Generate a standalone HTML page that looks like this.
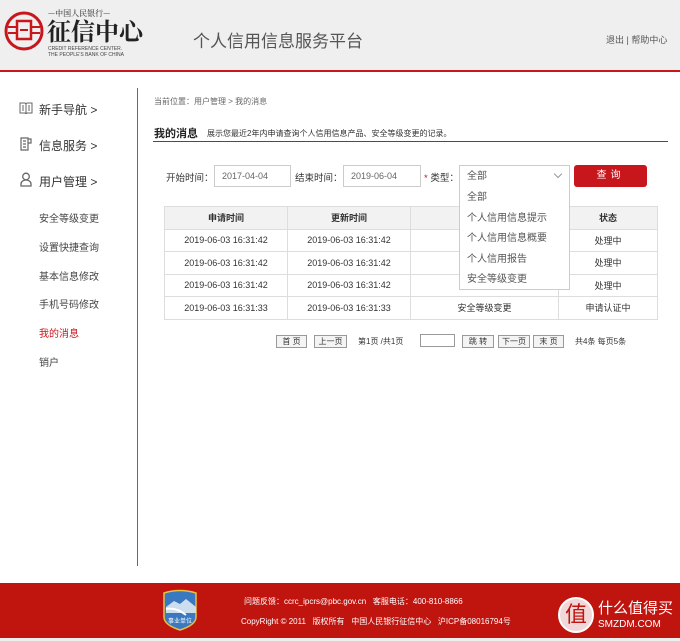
<!DOCTYPE html>
<html><head><meta charset="utf-8"><style>
*{margin:0;padding:0;box-sizing:border-box}
body{width:680px;height:641px;background:#fff;font-family:"Liberation Sans","Noto Sans CJK SC",sans-serif;position:relative;overflow:hidden;color:#333}
.a{position:absolute;white-space:nowrap}
.hdr{left:0;top:0;width:680px;height:70px;background:#efefef}
.rl{left:0;top:70px;width:680px;height:2px;background:#c8161d}
.vl{left:137px;top:88px;width:1px;height:478px;background:#d8393f}
.nav{font-size:12px;color:#333}
.sub{font-size:10px;color:#444}
.tbl{left:164px;top:206px;border-collapse:collapse;font-size:9px;color:#333}
.tbl td,.tbl th{border:1px solid #ddd;height:22.5px;text-align:center}
.tbl th{background:#f2f2f2;font-weight:bold}
.btn{border:1px solid #999;background:#f4f4f4;font-size:8px;height:13px;line-height:11px;text-align:center;color:#333}
.ip{border:1px solid #ccc;height:22px;font-size:9px;color:#666;line-height:20px;padding-left:7px;background:#fff}
.dd div{height:20.6px;line-height:20.6px;padding-left:7px;font-size:10px;color:#555}
</style></head><body>
<div class="a hdr"></div>
<svg class="a" style="left:4px;top:11px" width="40" height="40" viewBox="0 0 40 40"><circle cx="20" cy="20" r="18" fill="none" stroke="#c8161d" stroke-width="3"/><rect x="13" y="10" width="14" height="18" fill="none" stroke="#c8161d" stroke-width="2.5"/><path d="M4 16h10M4 22h10M26 16h10M26 22h10M16 19h8" stroke="#c8161d" stroke-width="2"/></svg>
<div class="a" style="left:48px;top:8px;font-size:8px;color:#222;font-family:'Noto Serif CJK SC',serif">—中国人民银行—</div>
<div class="a" style="left:47px;top:16px;font-size:24px;color:#222;font-weight:bold;font-family:'Noto Serif CJK SC',serif;letter-spacing:0px;line-height:28px">征信中心</div>
<div class="a" style="left:48px;top:46px;font-size:5px;color:#444;line-height:6px">CREDIT REFERENCE CENTER.<br>THE PEOPLE'S BANK OF CHINA</div>
<div class="a" style="left:193px;top:27px;font-size:17px;color:#555">个人信用信息服务平台</div>
<div class="a" style="left:606px;top:33px;font-size:9px;color:#555">退出 | 帮助中心</div>
<div class="a rl"></div>
<div class="a vl"></div>
<svg class="a" style="left:19px;top:102px" width="14" height="12" viewBox="0 0 14 12"><path d="M1 1h5l1 1 1-1h5v10H8l-1 1-1-1H1z M7 2v9 M3 4h2M3 6h2M3 8h2M9 4h2M9 6h2M9 8h2" fill="none" stroke="#666" stroke-width="1"/></svg>
<div class="a nav" style="left:39px;top:101px">新手导航 &gt;</div>
<svg class="a" style="left:19px;top:137px" width="14" height="14" viewBox="0 0 14 14"><path d="M2 1h7v12H2z M4 4h3M4 7h3M4 10h3 M9 2h3v4H9" fill="none" stroke="#666" stroke-width="1.2"/></svg>
<div class="a nav" style="left:39px;top:137px">信息服务 &gt;</div>
<svg class="a" style="left:20px;top:172px" width="12" height="15" viewBox="0 0 12 15"><circle cx="6" cy="4.5" r="3.3" fill="none" stroke="#666" stroke-width="1.3"/><path d="M1 14v-2a5 4 0 0 1 10 0v2z" fill="none" stroke="#666" stroke-width="1.3"/></svg>
<div class="a nav" style="left:39px;top:173px">用户管理 &gt;</div>
<div class="a sub" style="left:39px;top:210px">安全等级变更</div>
<div class="a sub" style="left:39px;top:239px">设置快捷查询</div>
<div class="a sub" style="left:39px;top:268px">基本信息修改</div>
<div class="a sub" style="left:39px;top:296px">手机号码修改</div>
<div class="a sub" style="left:39px;top:325px;color:#c8161d">我的消息</div>
<div class="a sub" style="left:39px;top:354px">销户</div>

<div class="a" style="left:154px;top:96px;font-size:8px;color:#666">当前位置：用户管理 &gt; 我的消息</div>
<div class="a" style="left:154px;top:125px;font-size:11px;font-weight:bold;color:#222">我的消息</div>
<div class="a" style="left:207px;top:128px;font-size:8px;color:#333">展示您最近2年内申请查询个人信用信息产品、安全等级变更的记录。</div>
<div class="a" style="left:153px;top:141px;width:515px;height:1px;background:#c8161d"></div>

<div class="a" style="left:166px;top:170px;font-size:9.5px;color:#333">开始时间：</div>
<div class="a ip" style="left:214px;top:165px;width:77px">2017-04-04</div>
<div class="a" style="left:295px;top:170px;font-size:9.5px;color:#333">结束时间：</div>
<div class="a ip" style="left:343px;top:165px;width:78px">2019-06-04</div>
<div class="a" style="left:424px;top:170px;font-size:9.5px;color:#333"><span style="color:#c8161d">*</span> 类型：</div>
<div class="a" style="left:574px;top:165px;width:73px;height:22px;background:#c8161d;border-radius:3px;color:#fff;font-size:10px;text-align:center;line-height:22px;letter-spacing:4px">查询</div>

<table class="a tbl">
<tr><th style="width:123px">申请时间</th><th style="width:123px">更新时间</th><th style="width:148px"></th><th style="width:99px">状态</th></tr>
<tr><td>2019-06-03 16:31:42</td><td>2019-06-03 16:31:42</td><td></td><td>处理中</td></tr>
<tr><td>2019-06-03 16:31:42</td><td>2019-06-03 16:31:42</td><td></td><td>处理中</td></tr>
<tr><td>2019-06-03 16:31:42</td><td>2019-06-03 16:31:42</td><td></td><td>处理中</td></tr>
<tr><td>2019-06-03 16:31:33</td><td>2019-06-03 16:31:33</td><td>安全等级变更</td><td>申请认证中</td></tr>
</table>
<div class="a dd" style="left:459px;top:165px;width:111px;height:125px;background:#fff;border:1px solid #ccc">
<div style="height:22px;line-height:21px">全部</div>
<div>全部</div><div>个人信用信息提示</div><div>个人信用信息概要</div><div>个人信用报告</div><div>安全等级变更</div></div>
<div class="a" style="left:555px;top:171px;width:6px;height:6px;border-right:1px solid #999;border-bottom:1px solid #999;transform:rotate(45deg)"></div>

<div class="a btn" style="left:276px;top:335px;width:31px">首 页</div>
<div class="a btn" style="left:314px;top:335px;width:33px">上一页</div>
<div class="a" style="left:358px;top:336px;font-size:8px">第1页 /共1页</div>
<div class="a" style="left:420px;top:334px;width:35px;height:13px;border:1px solid #999;background:#fff"></div>
<div class="a btn" style="left:462px;top:335px;width:32px">跳 转</div>
<div class="a btn" style="left:498px;top:335px;width:32px">下一页</div>
<div class="a btn" style="left:533px;top:335px;width:31px">末 页</div>
<div class="a" style="left:575px;top:336px;font-size:8px">共4条 每页5条</div>

<div class="a" style="left:0;top:583px;width:680px;height:55px;background:#c0140f"></div>
<div class="a" style="left:0;top:638px;width:680px;height:3px;background:#eee"></div>
<svg class="a" style="left:162px;top:589px" width="36" height="42" viewBox="0 0 36 42"><path d="M2 4Q18 -1 34 4V28Q34 36 18 41Q2 36 2 28Z" fill="#3a78c0" stroke="#e7c040" stroke-width="1.5"/><path d="M4 18l8-6 6 3 6-5 10 8v6H4z" fill="#cde"/><path d="M4 20q10-2 20 6" stroke="#fff" stroke-width="2" fill="none"/><text x="18" y="34" font-size="6" fill="#fff" text-anchor="middle">事业单位</text></svg>
<div class="a" style="left:244px;top:596px;font-size:8px;color:#fff">问题反馈：ccrc_ipcrs@pbc.gov.cn &nbsp;&nbsp;客服电话：400-810-8866</div>
<div class="a" style="left:241px;top:616px;font-size:8px;color:#fff">CopyRight © 2011 &nbsp;&nbsp;版权所有 &nbsp;&nbsp;中国人民银行征信中心 &nbsp;&nbsp;沪ICP备08016794号</div>
<div class="a" style="left:558px;top:597px;width:36px;height:36px;border-radius:50%;background:#f1d7d7;border:2px solid #fff;color:#c0140f;font-size:22px;text-align:center;line-height:32px">值</div>
<div class="a" style="left:598px;top:597px;font-size:15px;color:#fff">什么值得买</div>
<div class="a" style="left:598px;top:619px;font-size:10px;color:#fff">SMZDM.COM</div>
</body></html>
